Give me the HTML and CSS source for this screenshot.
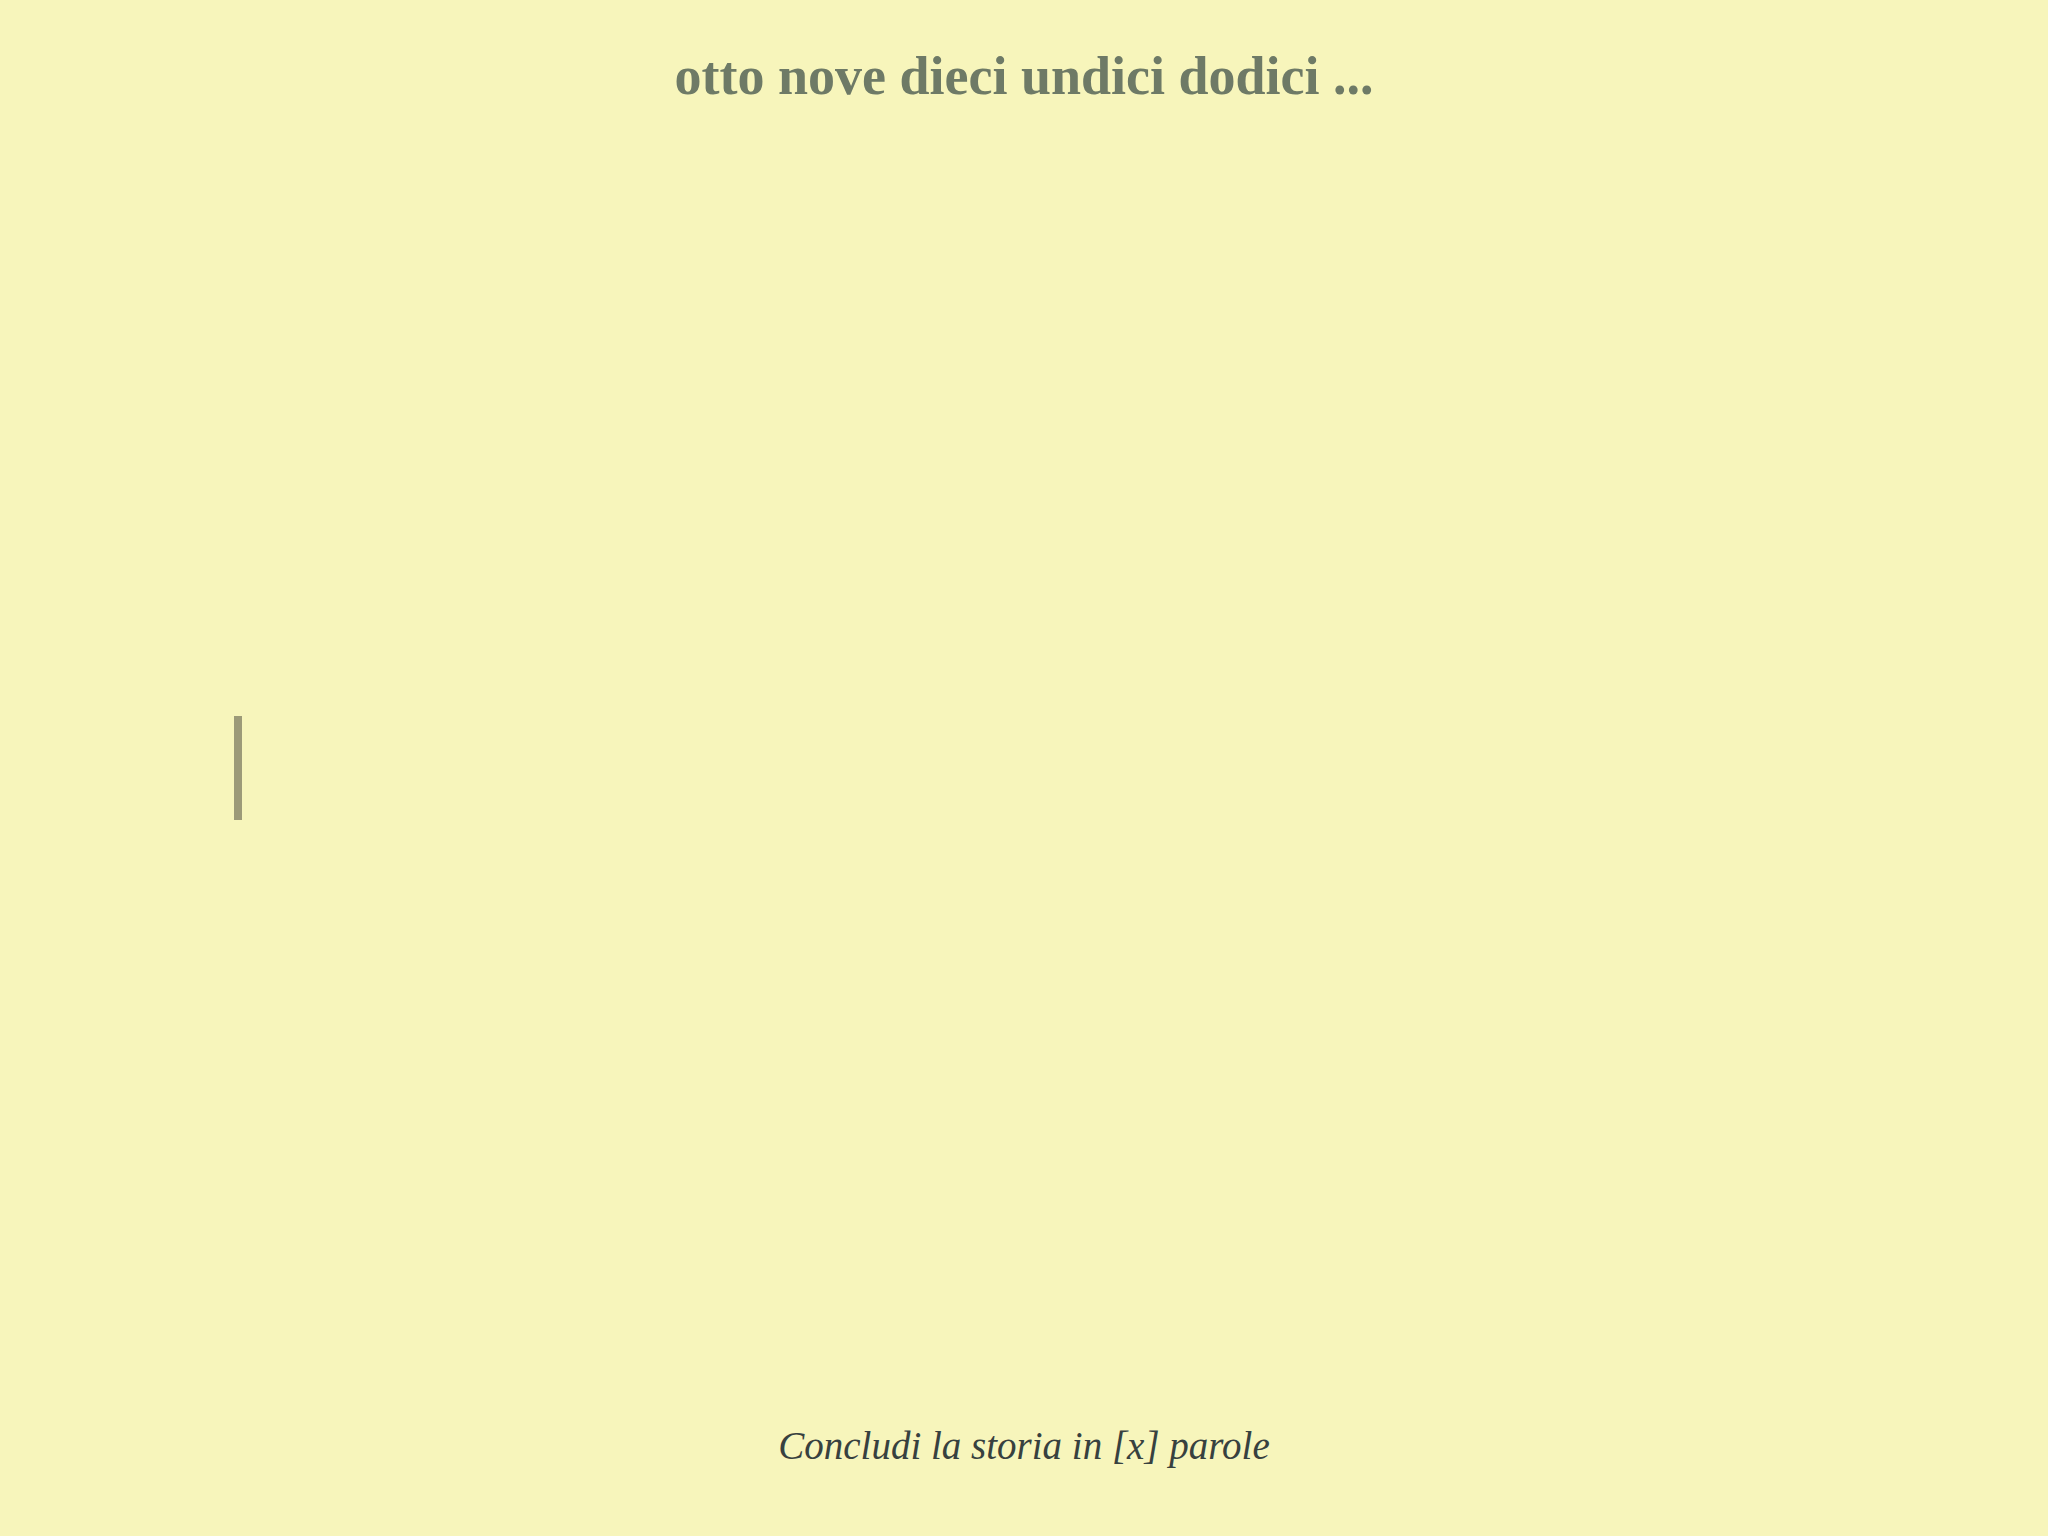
FILE: index.html
```html
<!DOCTYPE html>
<html lang="it">
<head>
<meta charset="utf-8">
<title>Storia</title>
<link rel="stylesheet" href="styles.css">
</head>
<body>
<div class="page">
  <header class="head">
    <h1 class="title">otto nove dieci undici dodici ...</h1>
  </header>
  <main class="editor">
    <span class="caret"></span>
  </main>
  <footer class="foot">
    <p class="prompt">Concludi la storia in [x] parole</p>
  </footer>
</div>
</body>
</html>
```
FILE: styles.css
```css
html, body {
  margin: 0;
  padding: 0;
  background: #f7f5bb;
}
.page {
  height: 1536px;
  display: grid;
  grid-template-rows: 160px 1fr 160px;
  font-family: "Liberation Serif", "DejaVu Serif", serif;
}
.head {
  display: flex;
  justify-content: center;
  padding-top: 46px;
}
.title {
  margin: 0;
  font-size: 54px;
  line-height: 60px;
  font-weight: 700;
  color: #6e7a66;
}
.editor {
  display: flex;
  align-items: center;
  padding-left: 234px;
}
.caret {
  display: block;
  width: 8px;
  height: 104px;
  background: #9c9a78;
}
.foot {
  display: flex;
  justify-content: center;
  align-items: flex-start;
}
.prompt {
  margin: 0;
  padding-top: 46px;
  font-size: 39px;
  line-height: 48px;
  font-style: italic;
  color: #37413f;
}
```
